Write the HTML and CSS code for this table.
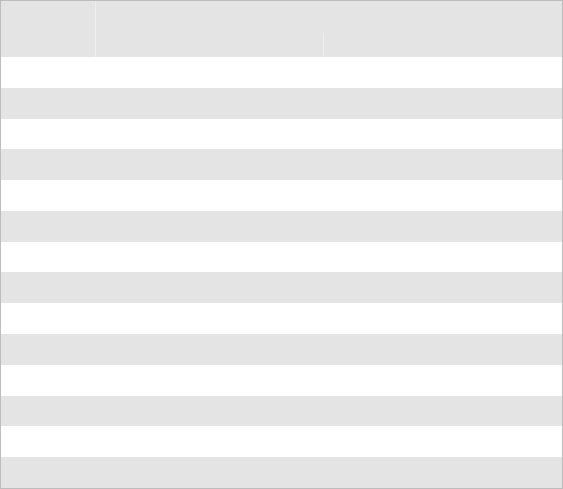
FILE: index.html
```html
<!DOCTYPE html>
<html>
<head>
<meta charset="utf-8">
<link rel="stylesheet" href="styles.css">
</head>
<body>
<div class="frame">
  <div class="head">
    <div class="h-first"></div>
    <div class="h-div h-div-full"></div>
    <div class="h-group">
      <div class="h-group-top"></div>
      <div class="h-group-bottom">
        <div class="h-sub"></div>
        <div class="h-div"></div>
        <div class="h-sub"></div>
      </div>
    </div>
  </div>
  <div class="rows">
    <div class="row"></div><div class="row"></div><div class="row"></div><div class="row"></div>
    <div class="row"></div><div class="row"></div><div class="row"></div><div class="row"></div>
    <div class="row"></div><div class="row"></div><div class="row"></div><div class="row"></div>
    <div class="row"></div><div class="row"></div>
  </div>
</div>
</body>
</html>
```
FILE: styles.css
```css
html, body {
  margin: 0;
  padding: 0;
  background: #ffffff;
  font-family: "Liberation Sans", Arial, sans-serif;
}
.frame {
  width: 563px;
  height: 489px;
  box-sizing: border-box;
  border: 1px solid #bdbdbd;
  border-left-color: #bdbdbd;
  display: flex;
  flex-direction: column;
}
.head {
  height: 56px;
  flex: 0 0 56px;
  display: flex;
  background: #e4e4e4;
}
.h-first {
  width: 94px;
}
.h-div {
  width: 1px;
  background: #efefef;
}
.h-group {
  flex: 1;
  display: flex;
  flex-direction: column;
}
.h-group-top {
  height: 32px;
}
.h-group-bottom {
  flex: 1;
  display: flex;
}
.h-sub:first-child {
  width: 227px;
}
.h-sub:last-child {
  flex: 1;
}
.rows {
  flex: 1;
  display: flex;
  flex-direction: column;
}
.row {
  flex: 1;
  background: #ffffff;
}
.row:nth-child(even) {
  background: #e4e4e4;
}
```
